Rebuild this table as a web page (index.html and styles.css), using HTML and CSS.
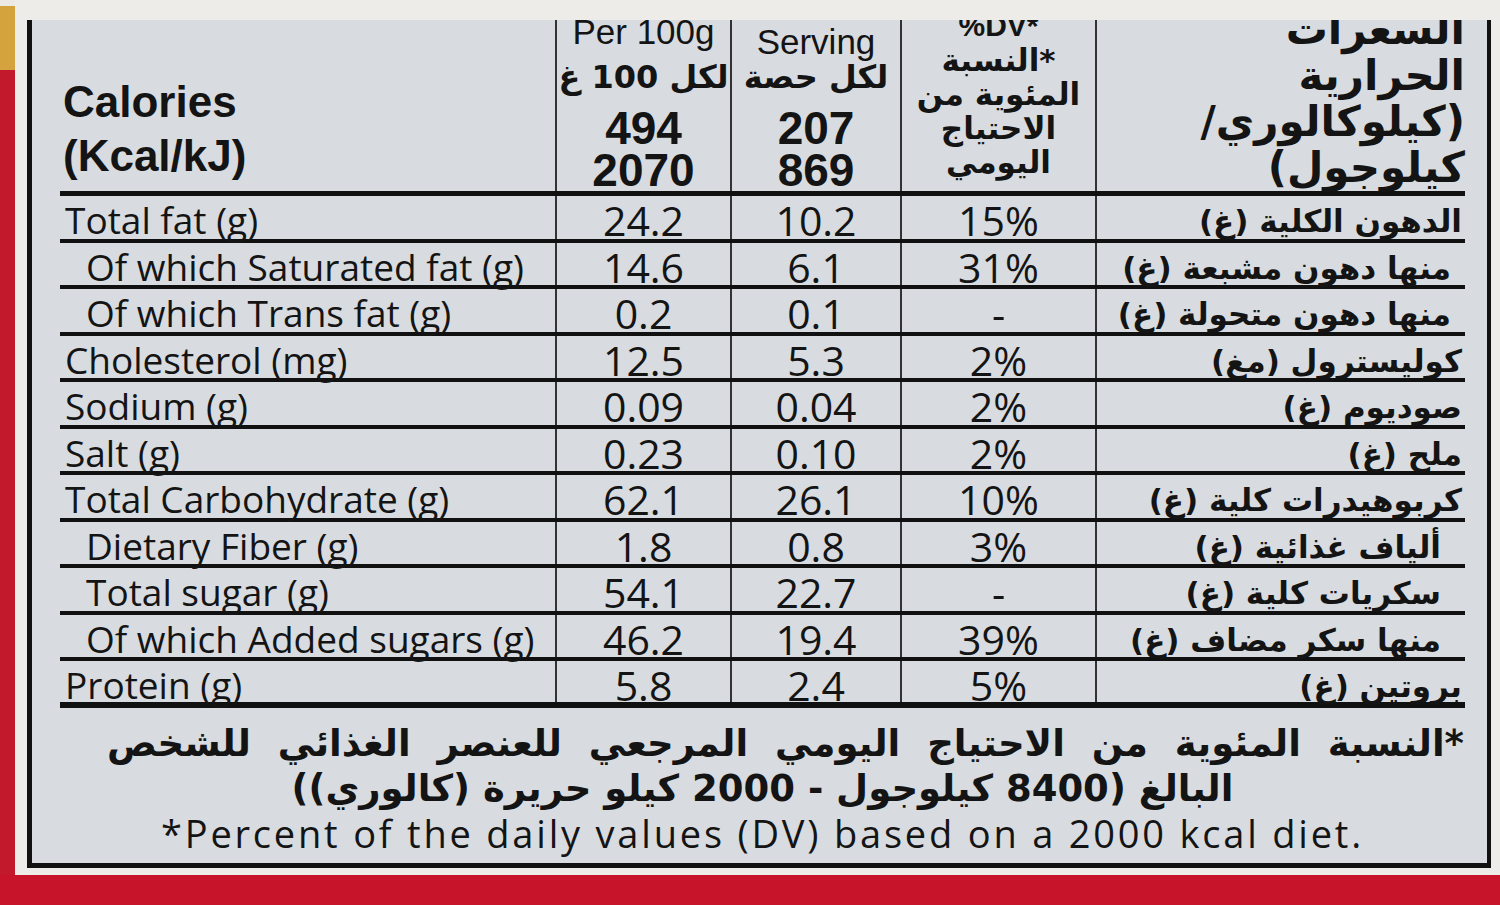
FILE: index.html
```html
<!DOCTYPE html>
<html lang="en">
<head>
    <meta charset="UTF-8">
    <meta name="viewport" content="width=device-width, initial-scale=1.0">
    <title>Nutrition Facts</title>
    <link rel="stylesheet" href="styles.css">
</head>
<body>

    <div class="pack">
        <!-- red / gold edge of the box -->
        <div class="edge"></div>

        <div class="sheet">
            <div class="label">

                <!-- Header row -->
                <div class="row head">
                    <div class="cell name-head">
                        <span>Calories</span>
                        <span>(Kcal/kJ)</span>
                    </div>
                    <div class="cell col-head">
                        <span class="h-en first">Per 100g</span>
                        <span class="h-ar">لكل 100 غ</span>
                        <span class="h-num">494</span>
                        <span class="h-num">2070</span>
                    </div>
                    <div class="cell col-head">
                        <span class="h-en">Per</span>
                        <span class="h-en">Serving</span>
                        <span class="h-ar">لكل حصة</span>
                        <span class="h-num">207</span>
                        <span class="h-num">869</span>
                    </div>
                    <div class="cell col-head dv-head">
                        <span class="h-dv">%DV*</span>
                        <span class="h-ar-sm">النسبة*</span>
                        <span class="h-ar-sm">المئوية من</span>
                        <span class="h-ar-sm">الاحتياج</span>
                        <span class="h-ar-sm">اليومي</span>
                    </div>
                    <div class="cell ar-head" dir="rtl">
                        <span>السعرات</span>
                        <span>الحرارية</span>
                        <span>(كيلوكالوري/</span>
                        <span>كيلوجول)</span>
                    </div>
                </div>

                <!-- Nutrient rows -->
                <div class="row">
                    <div class="cell name">Total fat (g)</div>
                    <div class="cell num">24.2</div>
                    <div class="cell num">10.2</div>
                    <div class="cell num">15%</div>
                    <div class="cell ar" dir="rtl">الدهون الكلية (غ)</div>
                </div>
                <div class="row">
                    <div class="cell name sub">Of which Saturated fat (g)</div>
                    <div class="cell num">14.6</div>
                    <div class="cell num">6.1</div>
                    <div class="cell num">31%</div>
                    <div class="cell ar sub" dir="rtl">منها دهون مشبعة (غ)</div>
                </div>
                <div class="row">
                    <div class="cell name sub">Of which Trans fat (g)</div>
                    <div class="cell num">0.2</div>
                    <div class="cell num">0.1</div>
                    <div class="cell num">-</div>
                    <div class="cell ar sub" dir="rtl">منها دهون متحولة (غ)</div>
                </div>
                <div class="row">
                    <div class="cell name">Cholesterol (mg)</div>
                    <div class="cell num">12.5</div>
                    <div class="cell num">5.3</div>
                    <div class="cell num">2%</div>
                    <div class="cell ar" dir="rtl">كوليسترول (مغ)</div>
                </div>
                <div class="row">
                    <div class="cell name">Sodium (g)</div>
                    <div class="cell num">0.09</div>
                    <div class="cell num">0.04</div>
                    <div class="cell num">2%</div>
                    <div class="cell ar" dir="rtl">صوديوم (غ)</div>
                </div>
                <div class="row">
                    <div class="cell name">Salt (g)</div>
                    <div class="cell num">0.23</div>
                    <div class="cell num">0.10</div>
                    <div class="cell num">2%</div>
                    <div class="cell ar" dir="rtl">ملح (غ)</div>
                </div>
                <div class="row">
                    <div class="cell name">Total Carbohydrate (g)</div>
                    <div class="cell num">62.1</div>
                    <div class="cell num">26.1</div>
                    <div class="cell num">10%</div>
                    <div class="cell ar" dir="rtl">كربوهيدرات كلية (غ)</div>
                </div>
                <div class="row">
                    <div class="cell name sub">Dietary Fiber (g)</div>
                    <div class="cell num">1.8</div>
                    <div class="cell num">0.8</div>
                    <div class="cell num">3%</div>
                    <div class="cell ar sub2" dir="rtl">ألياف غذائية (غ)</div>
                </div>
                <div class="row">
                    <div class="cell name sub">Total sugar (g)</div>
                    <div class="cell num">54.1</div>
                    <div class="cell num">22.7</div>
                    <div class="cell num">-</div>
                    <div class="cell ar sub2" dir="rtl">سكريات كلية (غ)</div>
                </div>
                <div class="row">
                    <div class="cell name sub">Of which Added sugars (g)</div>
                    <div class="cell num">46.2</div>
                    <div class="cell num">19.4</div>
                    <div class="cell num">39%</div>
                    <div class="cell ar sub2" dir="rtl">منها سكر مضاف (غ)</div>
                </div>
                <div class="row last">
                    <div class="cell name">Protein (g)</div>
                    <div class="cell num">5.8</div>
                    <div class="cell num">2.4</div>
                    <div class="cell num">5%</div>
                    <div class="cell ar" dir="rtl">بروتين (غ)</div>
                </div>

                <!-- Footnote -->
                <div class="note">
                    <p class="note-ar wide" dir="rtl">*النسبة المئوية من الاحتياج اليومي المرجعي للعنصر الغذائي للشخص</p>
                    <p class="note-ar" dir="rtl">البالغ (8400 كيلوجول - 2000 كيلو حريرة (كالوري))</p>
                    <p class="note-en">*Percent of the daily values (DV) based on a 2000 kcal diet.</p>
                </div>

            </div>
        </div>
    </div>

    <div class="band"></div>

</body>
</html>
```

FILE: styles.css
```css
body, html {
    margin: 0;
    padding: 0;
    background-color: #ece9e4;
    color: #141414;
    font-family: "Open Sans", sans-serif;
}

/* Box outline: edge on the left, sheet in the middle */
.pack {
    display: flex;
    height: 875px;
}

.edge {
    width: 15px;
    background: linear-gradient(#ece9e4 0 6px, #d4a33e 6px 70px, #c3192c 70px);
}

.sheet {
    flex: 1;
    background-color: #eeece8;
    padding: 20px 9px 7px 12px;
}

/* Printed label */
.label {
    height: 100%;
    box-sizing: border-box;
    background-color: #d8dce0;
    border-left: 5px solid #111;
    border-right: 4px solid #111;
    border-bottom: 5px solid #111;
    padding: 0 22px 0 28px;
    overflow: hidden;
}

.row {
    display: grid;
    grid-template-columns: 495px 175px 170px 195px 370px;
    grid-template-rows: 100%;
    height: 46.5px;
    box-sizing: border-box;
    border-bottom: 4px solid #111;
}

.row.last {
    height: 47px;
    border-bottom-width: 6px;
}

.row > .cell + .cell {
    border-left: 2px solid #333;
}

.cell {
    min-height: 0;
    line-height: 42.5px;
    white-space: nowrap;
}

.name {
    font-size: 37px;
    font-weight: 500;
    padding: 3px 0 0 5px;
}

.name.sub {
    padding-left: 26px;
}

.num {
    font-size: 41px;
    font-weight: 500;
    text-align: center;
    padding-top: 3px;
}

.ar {
    font-family: "DejaVu Sans", sans-serif;
    font-weight: bold;
    font-size: 31px;
    padding: 4px 3px 0 0;
}

.ar.sub {
    padding-right: 14px;
}

.ar.sub2 {
    padding-right: 24px;
}

/* Header row */
.row.head {
    height: 176px;
    border-bottom-width: 5px;
}

.head .cell {
    display: flex;
    flex-direction: column;
    justify-content: flex-end;
    padding-top: 0;
}

.name-head {
    font-family: "Liberation Sans", Arial, sans-serif;
    font-weight: bold;
    font-size: 44px;
    line-height: 54px;
    padding: 0 0 8px 3px;
}

.col-head {
    align-items: center;
    font-family: "Liberation Sans", Arial, sans-serif;
}

.h-en {
    font-size: 35px;
    line-height: 34px;
}

.h-en.first {
    margin-bottom: 10px;
}

.h-ar {
    font-family: "DejaVu Sans", sans-serif;
    font-weight: bold;
    font-size: 32px;
    line-height: 36px;
    margin-bottom: 12px;
}

.h-num {
    font-weight: bold;
    font-size: 46px;
    line-height: 42px;
}

.dv-head {
    padding-bottom: 12px;
}

.h-dv {
    font-weight: bold;
    font-size: 30px;
    line-height: 32px;
    margin-bottom: 1px;
}

.h-ar-sm {
    font-family: "DejaVu Sans", sans-serif;
    font-weight: bold;
    font-size: 31px;
    line-height: 34px;
}

.ar-head {
    font-family: "DejaVu Sans", sans-serif;
    font-weight: bold;
    font-size: 42px;
    line-height: 46px;
}

/* Footnote under the table */
.note {
    padding-top: 13px;
    width: 1405px;
    text-align: center;
}

.note p {
    margin: 0;
    line-height: 45px;
    white-space: nowrap;
}

.note-ar {
    font-family: "DejaVu Sans", sans-serif;
    font-weight: bold;
    font-size: 37px;
}

.note-ar.wide {
    padding-left: 46px;
    word-spacing: 14px;
}

.note-en {
    font-size: 38px;
    font-weight: 500;
    letter-spacing: 2.8px;
    line-height: 42px;
}

.band {
    height: 30px;
    background-color: #c8142a;
}
```
